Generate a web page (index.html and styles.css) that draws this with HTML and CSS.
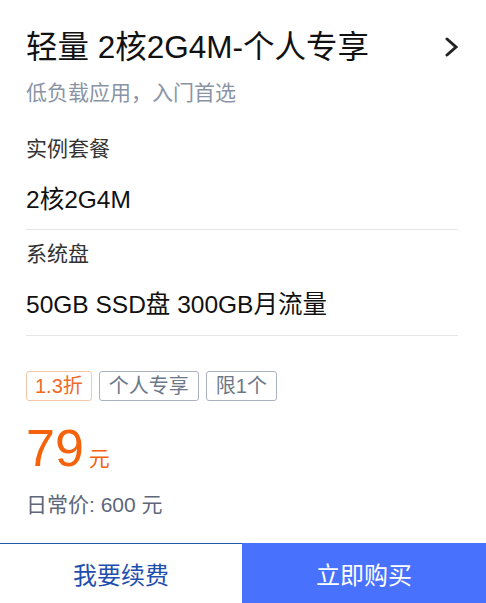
FILE: index.html
```html
<!DOCTYPE html>
<html lang="zh-CN">
<head>
<meta charset="utf-8">
<title>轻量 2核2G4M-个人专享</title>
<link rel="stylesheet" href="styles.css">
</head>
<body>
<div class="page">
  <div class="content">
    <div class="head">
      <h1 class="title">轻量 2核2G4M-个人专享</h1>
      <svg class="chev" width="16" height="20" viewBox="0 0 16 20"><path d="M3 2 L12 10 L3 18" fill="none" stroke="#222" stroke-width="3" stroke-linecap="round" stroke-linejoin="miter"/></svg>
    </div>
    <p class="sub">低负载应用，入门首选</p>

    <div class="sect first">
      <div class="label">实例套餐</div>
      <div class="value">2核2G4M</div>
    </div>
    <div class="sect second">
      <div class="label">系统盘</div>
      <div class="value">50GB SSD盘 300GB月流量</div>
    </div>

    <div class="tags">
      <span class="tag tag-orange">1.3折</span>
      <span class="tag">个人专享</span>
      <span class="tag">限1个</span>
    </div>

    <div class="price"><span class="num">79</span><span class="unit">元</span></div>
    <div class="orig">日常价: 600 元</div>
  </div>

  <div class="bar">
    <div class="btn btn-renew">我要续费</div>
    <div class="btn btn-buy">立即购买</div>
  </div>
</div>
</body>
</html>
```

FILE: styles.css
```css
* { box-sizing: border-box; }
html, body { margin: 0; padding: 0; background: #fff; }
body {
  font-family: "Liberation Sans", "Noto Sans CJK SC", sans-serif;
  color: #1a1a1a;
}
.page { width: 486px; }
.content { padding: 27px 28px 0 26px; }
.head {
  display: flex;
  align-items: center;
  justify-content: space-between;
  height: 40px;
}
.title {
  margin: 0;
  font-size: 31.5px;
  line-height: 40px;
  font-weight: normal;
  color: #111;
}
.chev { display: block; margin-right: -2px; }
.sub {
  margin: 12px 0 0;
  font-size: 21px;
  line-height: 28px;
  color: #8a94a5;
}
.sect { border-bottom: 1px solid #e6e6e6; padding-bottom: 13px; }
.sect.first { margin-top: 28px; }
.sect.second { margin-top: 10px; padding-bottom: 14px; }
.label {
  font-size: 21px;
  line-height: 28px;
  color: #333;
}
.value {
  margin-top: 21px;
  font-size: 24.5px;
  line-height: 32px;
  color: #111;
}
.tags {
  display: flex;
  gap: 7px;
  margin-top: 35px;
}
.tag {
  display: inline-block;
  height: 30px;
  line-height: 28px;
  padding: 0 9px;
  font-size: 20px;
  border: 1px solid #aab2bf;
  border-radius: 3px;
  color: #6c7889;
}
.tag-orange { border-color: #f6c8a6; color: #ef6a26; padding: 0 8px; }
.price {
  margin-top: 17px;
  height: 60px;
  line-height: 60px;
  color: #f5620c;
}
.num { font-size: 52px; }
.unit { font-size: 21px; margin-left: 5px; line-height: 1; }
.orig {
  margin-top: 13px;
  font-size: 21px;
  line-height: 28px;
  color: #5d677a;
}
.bar {
  margin-top: 24px;
  display: flex;
  height: 60px;
}
.btn {
  display: flex;
  align-items: center;
  justify-content: center;
  font-size: 24px;
}
.btn-renew {
  width: 242px;
  border-top: 1px solid #245aa3;
  color: #1e4fae;
  background: #fff;
}
.btn-buy {
  flex: 1;
  background: #4872fe;
  color: #fff;
}
```
